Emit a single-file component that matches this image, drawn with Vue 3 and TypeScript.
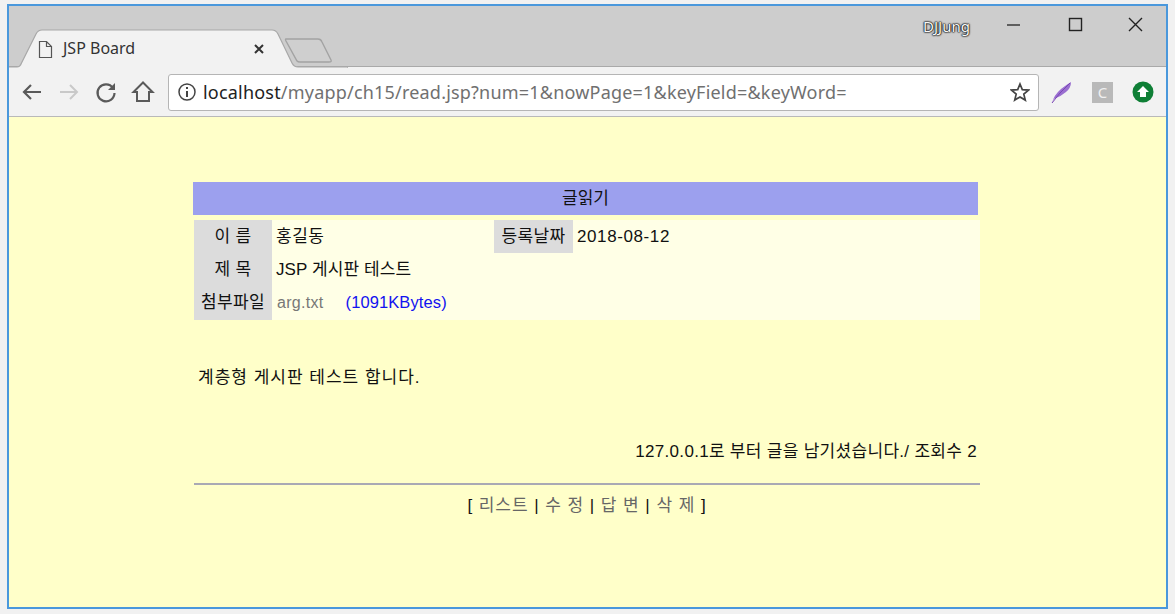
<script setup lang="ts">
const rows = [
  { label: '이 름', value: '홍길동' },
  { label: '제 목', value: 'JSP 게시판 테스트' },
]
</script>

<template>
  <div class="window">
    <header class="strip">
      <svg class="tabs" width="340" height="63" viewBox="0 0 340 63">
        <path d="M0 62H9Q12 62 13.5 58L28 29Q30 25 34 25H264Q268 25 270 29L284 58Q286 62 290 62H340V64H0Z" fill="#f2f2f2" stroke="#a8a8a8" stroke-width="1.2"/>
        <path d="M278 34Q277 34 278 36L289 56Q290 57 292 57H321Q324 57 323 55L314 37Q313 34 310 34Z" fill="#cfcfcf" stroke="#a3a3a3" stroke-width="1.4"/>
        <path d="M31.500 36.500H38.500L43.500 41.500V52.500H31.500Z M38.500 36.500V41.500H43.500" fill="none" stroke="#555" stroke-width="1.200"/>
        <path d="M247 40L255 48M255 40L247 48" stroke="#333" stroke-width="2"/>
      </svg>
      <span class="tab-title">JSP Board</span>
      <span class="user">DJJung</span>
      <svg class="winctl" width="150" height="24" viewBox="0 0 150 24">
        <path d="M0 12H13" stroke="#222" stroke-width="1.300"/>
        <rect x="62.500" y="5.500" width="12" height="12" fill="none" stroke="#222" stroke-width="1.400"/>
        <path d="M122 5L135 18M135 5L122 18" stroke="#222" stroke-width="1.400"/>
      </svg>
    </header>

    <nav class="toolbar">
      <svg class="nav-icon" width="24" height="24" viewBox="0 0 24 24"><path d="M21 12H4M11 5L4 12L11 19" fill="none" stroke="#5a5a5a" stroke-width="2.200"/></svg>
      <svg class="nav-icon" width="24" height="24" viewBox="0 0 24 24"><path d="M3 12H20M13 5L20 12L13 19" fill="none" stroke="#c9c9c9" stroke-width="2"/></svg>
      <svg class="nav-icon" width="24" height="24" viewBox="0 0 24 24"><path d="M19 8A8.500 8.500 0 1 0 20.500 13" fill="none" stroke="#5a5a5a" stroke-width="2.200"/><path d="M21 3V10H14Z" fill="#5a5a5a"/></svg>
      <svg class="nav-icon" width="24" height="24" viewBox="0 0 24 24"><path d="M12 2.500L2.500 12H6V21H18V12H21.500Z" fill="none" stroke="#5a5a5a" stroke-width="2"/></svg>
      <div class="omnibox">
        <svg width="20" height="20" viewBox="0 0 20 20"><circle cx="10" cy="10" r="8" fill="none" stroke="#444" stroke-width="1.500"/><path d="M10 9V15M10 5V7" stroke="#444" stroke-width="2"/></svg>
        <span class="url"><b>localhost</b>/myapp/ch15/read.jsp?num=1&amp;nowPage=1&amp;keyField=&amp;keyWord=</span>
        <svg class="star" width="20" height="20" viewBox="0 0 20 20"><path d="M10 2L12.300 7.600L18.500 8.100L13.800 12.100L15.300 18.100L10 14.900L4.700 18.100L6.200 12.100L1.500 8.100L7.700 7.600Z" fill="none" stroke="#444" stroke-width="1.700"/></svg>
      </div>
      <svg class="ext feather" width="22" height="24" viewBox="0 0 22 24"><path d="M1 23Q3 15 10 9Q15 5 20 2Q20 8 15 12Q9 17 3 19Z" fill="#9a6fd0"/><path d="M1 23Q8 13 19 3" stroke="#7a45b5" stroke-width="1" fill="none"/></svg>
      <span class="ext badge">C</span>
      <svg class="ext" width="22" height="22" viewBox="0 0 22 22"><circle cx="11" cy="11" r="10.500" fill="#0f7f36"/><path d="M11 5L17 11H14V16H8V11H5Z" fill="#fff"/></svg>
    </nav>

    <main class="page">
      <h1 class="title">글읽기</h1>
      <div class="info">
        <div class="row">
          <span class="label">{{ rows[0].label }}</span>
          <span class="value first">{{ rows[0].value }}</span>
          <span class="label">등록날짜</span>
          <span class="value">2018-08-12</span>
        </div>
        <div class="row">
          <span class="label">{{ rows[1].label }}</span>
          <span class="value">{{ rows[1].value }}</span>
        </div>
        <div class="row">
          <span class="label">첨부파일</span>
          <span class="value"><a class="file">arg.txt</a><span class="size">(1091KBytes)</span></span>
        </div>
      </div>
      <p class="content">계층형 게시판 테스트 합니다.</p>
      <p class="meta">127.0.0.1로 부터 글을 남기셨습니다./ 조회수 2</p>
      <hr class="rule" />
      <p class="links">[ <a>리스트</a> | <a>수 정</a> | <a>답 변</a> | <a>삭 제</a> ]</p>
    </main>
  </div>
</template>

<style>
html, body { margin: 0; background: #f1f1f1; }
</style>

<style scoped>
.window {
  box-sizing: border-box;
  width: 1161px;
  height: 605px;
  margin: 4px 0 0 7px;
  border: 2px solid #4a98dc;
  display: flex;
  flex-direction: column;
  font-family: "Liberation Sans", "Noto Sans CJK KR", sans-serif;
  overflow: hidden;
}
.strip {
  position: relative;
  height: 61px;
  flex: none;
  background: #cdcdcd;
  border-bottom: 1px solid #a9a9a9;
  box-sizing: border-box;
}
.tabs { position: absolute; left: -1px; top: -1px; }
.tab-title {
  position: absolute; left: 54px; top: 31px;
  font: 16px "Noto Sans", sans-serif;
  color: #333;
}
.user {
  position: absolute; left: 914px; top: 10px;
  font: 15px "Noto Sans", sans-serif;
  color: #f8f8f8;
  text-shadow: 0 0 1px #111, 0 0 1px #111, 0 0 2px #111, 0 0 2px #111;
}
.winctl { position: absolute; left: 998px; top: 7px; }
.toolbar {
  height: 50px;
  flex: none;
  box-sizing: border-box;
  background: #f2f2f2;
  border-bottom: 1px solid #b9b9b9;
  display: flex;
  align-items: center;
  padding: 1px 0 0 11px;
}
.nav-icon { flex: none; margin-right: 13px; }
.nav-icon:nth-child(4) { margin-right: 13px; }
.omnibox {
  box-sizing: border-box;
  width: 871px;
  height: 37px;
  flex: none;
  background: #fff;
  border: 1px solid #b5b5b5;
  border-radius: 3px;
  display: flex;
  align-items: center;
  padding: 0 8px;
  gap: 6px;
}
.url {
  flex: 1;
  font: 18px "Noto Sans", sans-serif;
  letter-spacing: .2px;
  color: #707070;
  white-space: nowrap;
  overflow: hidden;
}
.url b { font-weight: 400; color: #222; }
.ext { flex: none; }
.feather { margin-left: 12px; }
.badge {
  box-sizing: border-box;
  width: 21px; height: 21px;
  margin-left: 19px;
  background: #b9b9b9;
  color: #f0f0f0;
  font: 15px/21px "Noto Sans", sans-serif;
  text-align: center;
}
.badge + svg { margin-left: 19px; }
.page {
  flex: 1;
  background: #ffffc9;
  padding: 65px 186px 0 184px;
  color: #111;
  font-size: 17px;
}
.title {
  margin: 0 2px 0 0;
  height: 33px;
  background: #9ca0ee;
  font: 400 17px/33px "Liberation Sans", "Noto Sans CJK KR", sans-serif;
  text-align: center;
}
.info {
  margin: 5px 0 0 1px;
  background: #ffffe6;
}
.row { display: flex; height: 33.300px; line-height: 33px; }
.row:nth-child(2) { line-height: 34px; }
.row:last-child { line-height: 31px; }
.label {
  flex: none;
  width: 78px;
  background: #dcdcdc;
  text-align: center;
  letter-spacing: .4px;
}
.row:first-child .label { height: 33px; }
.row:first-child .label:nth-child(3) { width: 79px; }
.value { padding-left: 4px; letter-spacing: .1px; }
.first { width: 218px; letter-spacing: .5px; }
.row:first-child .value:last-child { letter-spacing: .6px; }
.file { color: #777; font-size: 16px; letter-spacing: .3px; margin-left: 1px; }
.size { color: #1212f0; margin-left: 22px; font-size: 16.500px; }
.content { margin: 0; padding: 46px 0 0 5px; line-height: 24px; letter-spacing: 1px; }
.meta { margin: 50px 3px 0 0; line-height: 24px; text-align: right; letter-spacing: .3px; }
.rule { margin: 19px 0 0 1px; border: 0; height: 2px; background: #a9a9b4; }
.links { margin: 9px 0 0 1px; text-align: center; line-height: 24px; letter-spacing: .95px; }
.links a { color: #666; }
</style>
